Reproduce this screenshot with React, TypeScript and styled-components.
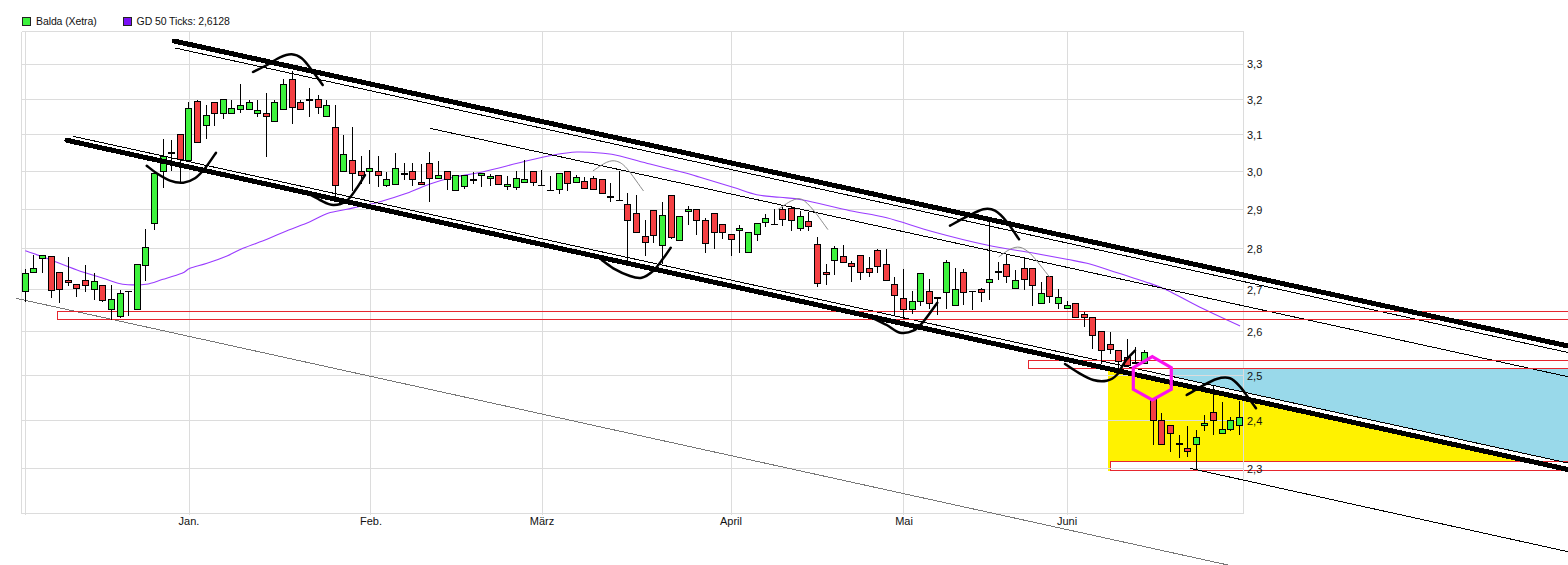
import React from "react";
import styled, { createGlobalStyle } from "styled-components";

const GlobalStyle = createGlobalStyle`
  html, body { margin: 0; padding: 0; background: #fff; }
  body { overflow: hidden; }
`;

const Page = styled.main`
  width: 1568px;
  height: 565px;
  display: flex;
  flex-direction: column;
  background: #fff;
  font-family: "Liberation Sans", Arial, sans-serif;
  overflow: hidden;
`;

const Legend = styled.header`
  height: 30px;
  flex: none;
  display: flex;
  align-items: center;
  padding: 17px 0 4px 22px;
  box-sizing: border-box;
  gap: 26px;
`;

const LegendItem = styled.div`
  display: flex;
  align-items: center;
  gap: 5px;
  font-size: 10.5px;
  letter-spacing: -0.1px;
  line-height: 13px;
  color: #111;
`;

const Swatch = styled.span<{ $color: string }>`
  width: 7px;
  height: 7px;
  flex: none;
  border: 1px solid #222;
  background: ${(p) => p.$color};
`;

const Chart = styled.svg`
  display: block;
  flex: none;
  width: 1568px;
  height: 535px;
  shape-rendering: crispEdges;
`;

const GridLine = styled.line`
  stroke: #dcdcdc;
  stroke-width: 1;
`;

const Fill = styled.polygon<{ $color: string }>`
  fill: ${(p) => p.$color};
  stroke: none;
`;

const Zone = styled.rect<{ $filled?: boolean }>`
  fill: ${(p) => (p.$filled ? "#fff" : "none")};
  stroke: #e6262e;
  stroke-width: 1;
`;

const Wick = styled.line`
  stroke: #000;
  stroke-width: 1;
`;

const CandleBody = styled.rect<{ $up: boolean }>`
  fill: ${(p) => (p.$up ? "#3cf23c" : "#f44043")};
  stroke: #000;
  stroke-width: 1;
`;

const Doji = styled.rect`
  fill: #000;
`;

const TrendLine = styled.line<{ $thick?: boolean; $color?: string }>`
  stroke: ${(p) => p.$color ?? "#000"};
  stroke-width: ${(p) => (p.$thick ? 5 : 1)};
  stroke-linecap: round;
`;

const Average = styled.path`
  fill: none;
  stroke: #9a3cff;
  stroke-width: 1.1;
  shape-rendering: auto;
`;

const HandCurve = styled.path<{ $faint?: boolean }>`
  fill: none;
  stroke: ${(p) => (p.$faint ? "#8a8a8a" : "#000")};
  stroke-width: ${(p) => (p.$faint ? 1 : 2.5)};
  stroke-linecap: round;
  stroke-linejoin: round;
  shape-rendering: auto;
`;

const Hexagon = styled.polygon`
  fill: none;
  stroke: #fb12ee;
  stroke-width: 3.2;
  stroke-linejoin: miter;
  shape-rendering: auto;
`;

const AxisLabel = styled.text<{ $center?: boolean }>`
  font-family: "Liberation Sans", Arial, sans-serif;
  font-size: 11px;
  fill: #111;
  text-anchor: ${(p) => (p.$center ? "middle" : "start")};
`;

type Kind = "g" | "r" | "d";
type Candle = [number, number, number, number, Kind];

const candles: Candle[] = [
  [268, 273, 291, 301, "g"], [254, 268, 272, 272, "g"], [255, 255, 258, 272, "g"], [256, 256, 290, 297, "r"],
  [272, 272, 289, 302, "r"], [256, 280, 282, 285, "r"], [283, 284, 288, 296, "r"], [264, 280, 285, 291, "r"],
  [272, 281, 289, 299, "g"], [285, 285, 300, 301, "r"], [284, 299, 309, 319, "g"], [289, 293, 316, 317, "g"],
  [291, 291, 291, 315, "d"], [264, 264, 309, 309, "g"], [228, 247, 265, 280, "g"], [173, 173, 223, 229, "g"],
  [138, 156, 171, 187, "g"], [139, 152, 152, 170, "d"], [134, 134, 159, 183, "r"], [101, 108, 160, 161, "g"],
  [99, 101, 142, 142, "r"], [104, 115, 125, 138, "g"], [102, 102, 113, 125, "r"], [99, 99, 113, 118, "g"],
  [99, 108, 113, 113, "g"], [83, 105, 109, 112, "g"], [99, 102, 109, 109, "g"], [99, 110, 113, 116, "g"],
  [92, 113, 116, 156, "r"], [99, 102, 121, 121, "g"], [78, 84, 109, 109, "g"], [70, 79, 107, 123, "r"],
  [99, 102, 109, 109, "r"], [87, 99, 99, 116, "d"], [94, 99, 107, 113, "r"], [99, 105, 116, 116, "g"],
  [104, 127, 185, 197, "r"], [134, 154, 171, 171, "g"], [126, 160, 173, 190, "r"], [155, 171, 175, 183, "r"],
  [149, 168, 171, 183, "g"], [155, 171, 175, 186, "r"], [171, 179, 185, 186, "g"], [152, 168, 184, 184, "g"],
  [162, 173, 173, 179, "d"], [162, 171, 179, 185, "r"], [163, 182, 184, 184, "r"], [151, 163, 178, 201, "r"],
  [160, 175, 178, 178, "g"], [171, 171, 179, 189, "r"], [175, 175, 190, 190, "g"], [175, 175, 186, 188, "g"],
  [171, 179, 179, 183, "d"], [173, 173, 175, 186, "g"], [173, 176, 178, 185, "g"], [175, 175, 184, 184, "r"],
  [175, 184, 186, 189, "g"], [170, 178, 187, 189, "g"], [159, 179, 182, 182, "g"], [170, 171, 182, 185, "r"],
  [169, 185, 185, 185, "d"], [175, 190, 190, 190, "d"], [173, 173, 189, 193, "g"], [171, 171, 183, 190, "r"],
  [174, 177, 182, 182, "g"], [176, 181, 188, 188, "r"], [175, 178, 189, 189, "r"], [179, 179, 193, 193, "r"],
  [182, 196, 196, 201, "d"], [170, 200, 200, 200, "d"], [192, 204, 220, 260, "r"], [194, 213, 232, 232, "r"],
  [219, 236, 242, 255, "r"], [210, 210, 235, 242, "r"], [201, 215, 245, 263, "g"], [195, 195, 237, 238, "r"],
  [216, 216, 240, 240, "g"], [205, 209, 211, 224, "g"], [209, 209, 220, 234, "r"], [217, 220, 243, 252, "r"],
  [213, 213, 232, 248, "r"], [224, 224, 232, 238, "r"], [234, 234, 239, 255, "r"], [224, 228, 230, 252, "g"],
  [232, 232, 252, 252, "g"], [223, 223, 234, 240, "g"], [213, 218, 222, 226, "g"], [208, 224, 224, 224, "d"],
  [206, 209, 219, 225, "r"], [205, 208, 220, 230, "r"], [210, 216, 228, 230, "g"], [211, 221, 226, 230, "r"],
  [236, 244, 283, 286, "r"], [263, 272, 274, 284, "r"], [245, 248, 260, 274, "g"], [244, 256, 262, 262, "r"],
  [260, 263, 266, 281, "r"], [255, 255, 272, 279, "r"], [256, 268, 272, 276, "r"], [248, 250, 266, 272, "r"],
  [248, 264, 280, 280, "r"], [276, 284, 295, 315, "r"], [268, 298, 309, 318, "r"], [290, 301, 309, 313, "g"],
  [273, 273, 301, 305, "g"], [278, 291, 303, 308, "r"], [297, 297, 297, 314, "d"], [259, 262, 292, 308, "g"],
  [267, 289, 305, 305, "g"], [268, 272, 292, 304, "r"], [291, 291, 291, 309, "d"], [287, 289, 292, 301, "r"],
  [218, 279, 282, 299, "g"], [261, 271, 271, 279, "d"], [254, 264, 276, 282, "r"], [269, 280, 288, 288, "g"],
  [256, 268, 279, 289, "r"], [268, 268, 285, 305, "r"], [281, 293, 303, 303, "g"], [276, 276, 296, 302, "r"],
  [288, 297, 303, 308, "g"], [300, 305, 308, 308, "g"], [302, 303, 317, 317, "r"], [311, 314, 317, 326, "r"],
  [317, 317, 335, 348, "r"], [331, 331, 350, 363, "r"], [331, 344, 349, 353, "r"], [349, 350, 361, 370, "r"],
  [338, 357, 365, 366, "r"], [346, 362, 362, 362, "d"], [349, 352, 363, 363, "g"], [398, 398, 420, 444, "r"],
  [412, 420, 444, 444, "r"], [425, 425, 433, 451, "r"], [434, 443, 443, 457, "d"], [425, 448, 451, 456, "r"],
  [429, 437, 444, 469, "g"], [414, 423, 425, 430, "g"], [384, 412, 420, 434, "r"], [401, 429, 433, 433, "g"],
  [416, 420, 429, 430, "g"], [400, 417, 425, 434, "g"],
];

const thinDoji = new Set([12, 60, 61, 69, 87, 110]);

const hLines = [64, 99, 134, 171, 209, 248, 289, 331, 375, 420, 468];
const vLines = [25, 189, 370, 542, 731, 903, 1067];
const yLabels: [string, number][] = [
  ["3,3", 68], ["3,2", 104], ["3,1", 139], ["3,0", 176], ["2,9", 214], ["2,8", 253],
  ["2,7", 294], ["2,6", 336], ["2,5", 380], ["2,4", 425], ["2,3", 473],
];
const xLabels: [string, number][] = [
  ["Jan.", 189], ["Feb.", 371], ["März", 542], ["April", 731], ["Mai", 904], ["Juni", 1067],
];

const trend: [number, number, number, number, boolean, string?][] = [
  [175, 48, 1568, 352.5, false],
  [430, 128.3, 1568, 376.7, false],
  [73, 136.3, 1568, 463, false],
  [1190, 468.3, 1568, 551.7, false],
  [16, 298.3, 1228, 565, false, "#777"],
];

const heavy: [number, number, number, number][] = [
  [174, 41, 1568, 346],
  [67, 140.3, 1568, 469.5],
];

type Pt = [number, number];

const avg: Pt[] = [
  [25.3, 250.7], [43, 257], [51, 260], [77, 270], [103, 278.3], [118, 283.3], [128, 284.7], [146, 284.3],
  [163, 279.3], [182, 273.3], [190, 268.3], [207, 263.3], [227, 256], [243, 248.3], [267, 239.3], [287, 230.7],
  [310, 221.7], [328, 213.3], [347, 209.3], [363, 205.7], [380, 201.7], [406.7, 193.3], [430, 184], [453.3, 177.3],
  [483.3, 171.7], [523.3, 161.7], [553.3, 155], [576.7, 152], [603.3, 153.3], [620, 156], [650, 164], [686.7, 173.3],
  [700, 177.3], [733, 187.3], [756.7, 194.7], [780, 197.3], [803, 200], [850, 210.7], [886.7, 217.7], [933, 231.7],
  [986.7, 245], [1033, 253], [1066.7, 259.3], [1087, 263.3], [1108.7, 270], [1145, 281.7], [1166.7, 290], [1200, 307.3], [1240, 326],
];

const curves: Pt[][] = [
  [[253, 72], [267, 65], [280, 57.3], [291.7, 54.3], [301.7, 58.3], [311.7, 70], [322.7, 85]],
  [[146.7, 165.7], [156.7, 173.3], [170, 180.7], [183.3, 182.7], [195, 178.3], [205, 168.3], [216, 152.7]],
  [[306.7, 192.7], [320, 200], [333.3, 205], [346.7, 200.7], [356.7, 188.3], [365, 175]],
  [[601.7, 260], [613.3, 268.3], [630, 276], [641.7, 277.7], [653.3, 270.7], [663.3, 258.3], [670.7, 247.7]],
  [[873.3, 318.3], [886.7, 325], [900, 332.7], [913.3, 330.7], [923.3, 321.7], [937.3, 302.7]],
  [[950, 225.7], [966.7, 216.7], [983.3, 209.3], [995, 210.7], [1006.7, 221.7], [1019, 239.3]],
  [[1065, 364], [1078.3, 372.7], [1093.3, 380], [1106.7, 380.7], [1116.7, 375], [1125, 361.7], [1135, 350.7]],
  [[1186.7, 395], [1200, 387.3], [1216.7, 379], [1230, 378.3], [1240, 386.7], [1250, 400], [1256, 408.3]],
];

const faintCurves: Pt[][] = [
  [[593.3, 170.7], [606.7, 162.3], [616.7, 161.3], [626.7, 168.3], [643.3, 190.7]],
  [[778.3, 209.3], [791.7, 200.7], [801.7, 199.3], [813.3, 210], [827.7, 229.3]],
  [[999, 256.7], [1010, 249.3], [1020, 247.3], [1030, 253.3], [1040, 265], [1049.3, 276.7]],
];

const smooth = (pts: Pt[]): string => {
  let d = `M${pts[0][0]} ${pts[0][1]}`;
  for (let i = 0; i < pts.length - 1; i++) {
    const p0 = pts[Math.max(i - 1, 0)];
    const p1 = pts[i];
    const p2 = pts[i + 1];
    const p3 = pts[Math.min(i + 2, pts.length - 1)];
    const c1x = p1[0] + (p2[0] - p0[0]) / 6;
    const c1y = p1[1] + (p2[1] - p0[1]) / 6;
    const c2x = p2[0] - (p3[0] - p1[0]) / 6;
    const c2y = p2[1] - (p3[1] - p1[1]) / 6;
    d += ` C${c1x.toFixed(1)} ${c1y.toFixed(1)} ${c2x.toFixed(1)} ${c2y.toFixed(1)} ${p2[0]} ${p2[1]}`;
  }
  return d;
};

const candleX = (i: number) => Math.floor(25.3 + 8.61 * i) + 0.5;

export default function App() {
  return (
    <Page>
      <GlobalStyle />
      <Legend>
        <LegendItem>
          <Swatch $color="#3cf23c" />
          Balda (Xetra)
        </LegendItem>
        <LegendItem>
          <Swatch $color="#7a10f5" />
          GD 50 Ticks: 2,6128
        </LegendItem>
      </Legend>
      <Chart viewBox="0 30 1568 535">
        <Fill $color="#99d9ea" points="1171,369 1568,369 1568,462.5 1171,376.5" />
        <Fill $color="#fff200" points="1108,368 1531,461.5 1110,461.5 1110,470.5 1108,470.5" />
        <Zone $filled x={1110.5} y={461.5} width={480} height={9} />

        <GridLine x1={21.5} y1={31.5} x2={1243.5} y2={31.5} />
        <GridLine x1={21.5} y1={513.5} x2={1243.5} y2={513.5} />
        <GridLine x1={21.5} y1={31.5} x2={21.5} y2={514} />
        <GridLine x1={1243.5} y1={31.5} x2={1243.5} y2={514} />
        {hLines.map((y) => (
          <GridLine key={y} x1={21.5} y1={y + 0.5} x2={1243.5} y2={y + 0.5} />
        ))}
        {vLines.map((x) => (
          <GridLine key={x} x1={x + 0.5} y1={31.5} x2={x + 0.5} y2={515} />
        ))}

        <Average d={smooth(avg)} />

        {trend.map(([x1, y1, x2, y2, , color]) => (
          <TrendLine key={`${x1}-${y1}`} x1={x1} y1={y1} x2={x2} y2={y2} $color={color} />
        ))}

        <Zone x={57.5} y={311.5} width={1530} height={8} />
        <Zone x={1028.5} y={360.5} width={560} height={8} />

        {candles.map(([wt, bt, bb, wb, kind], i) => {
          const x = candleX(i);
          return (
            <g key={i}>
              <Wick x1={x} y1={wt + 0.5} x2={x} y2={wb + 1} />
              {kind === "d" ? (
                <Doji x={x - 3.5} y={bt} width={7} height={thinDoji.has(i) ? 1 : 2} />
              ) : (
                <CandleBody $up={kind === "g"} x={x - 3} y={bt + 0.5} width={6} height={bb - bt} />
              )}
            </g>
          );
        })}

        {heavy.map(([x1, y1, x2, y2]) => (
          <TrendLine key={x1} $thick x1={x1} y1={y1} x2={x2} y2={y2} />
        ))}

        {faintCurves.map((c, i) => (
          <HandCurve key={i} $faint d={smooth(c)} />
        ))}
        {curves.map((c, i) => (
          <HandCurve key={i} d={smooth(c)} />
        ))}

        <Hexagon points="1152.3,356.7 1171.3,367.7 1171.3,389.3 1152.3,400 1133.3,389.3 1133.3,367.7" />

        {yLabels.map(([t, y]) => (
          <AxisLabel key={t} x={1247} y={y}>
            {t}
          </AxisLabel>
        ))}
        {xLabels.map(([t, x]) => (
          <AxisLabel key={t} $center x={x} y={525}>
            {t}
          </AxisLabel>
        ))}
      </Chart>
    </Page>
  );
}
